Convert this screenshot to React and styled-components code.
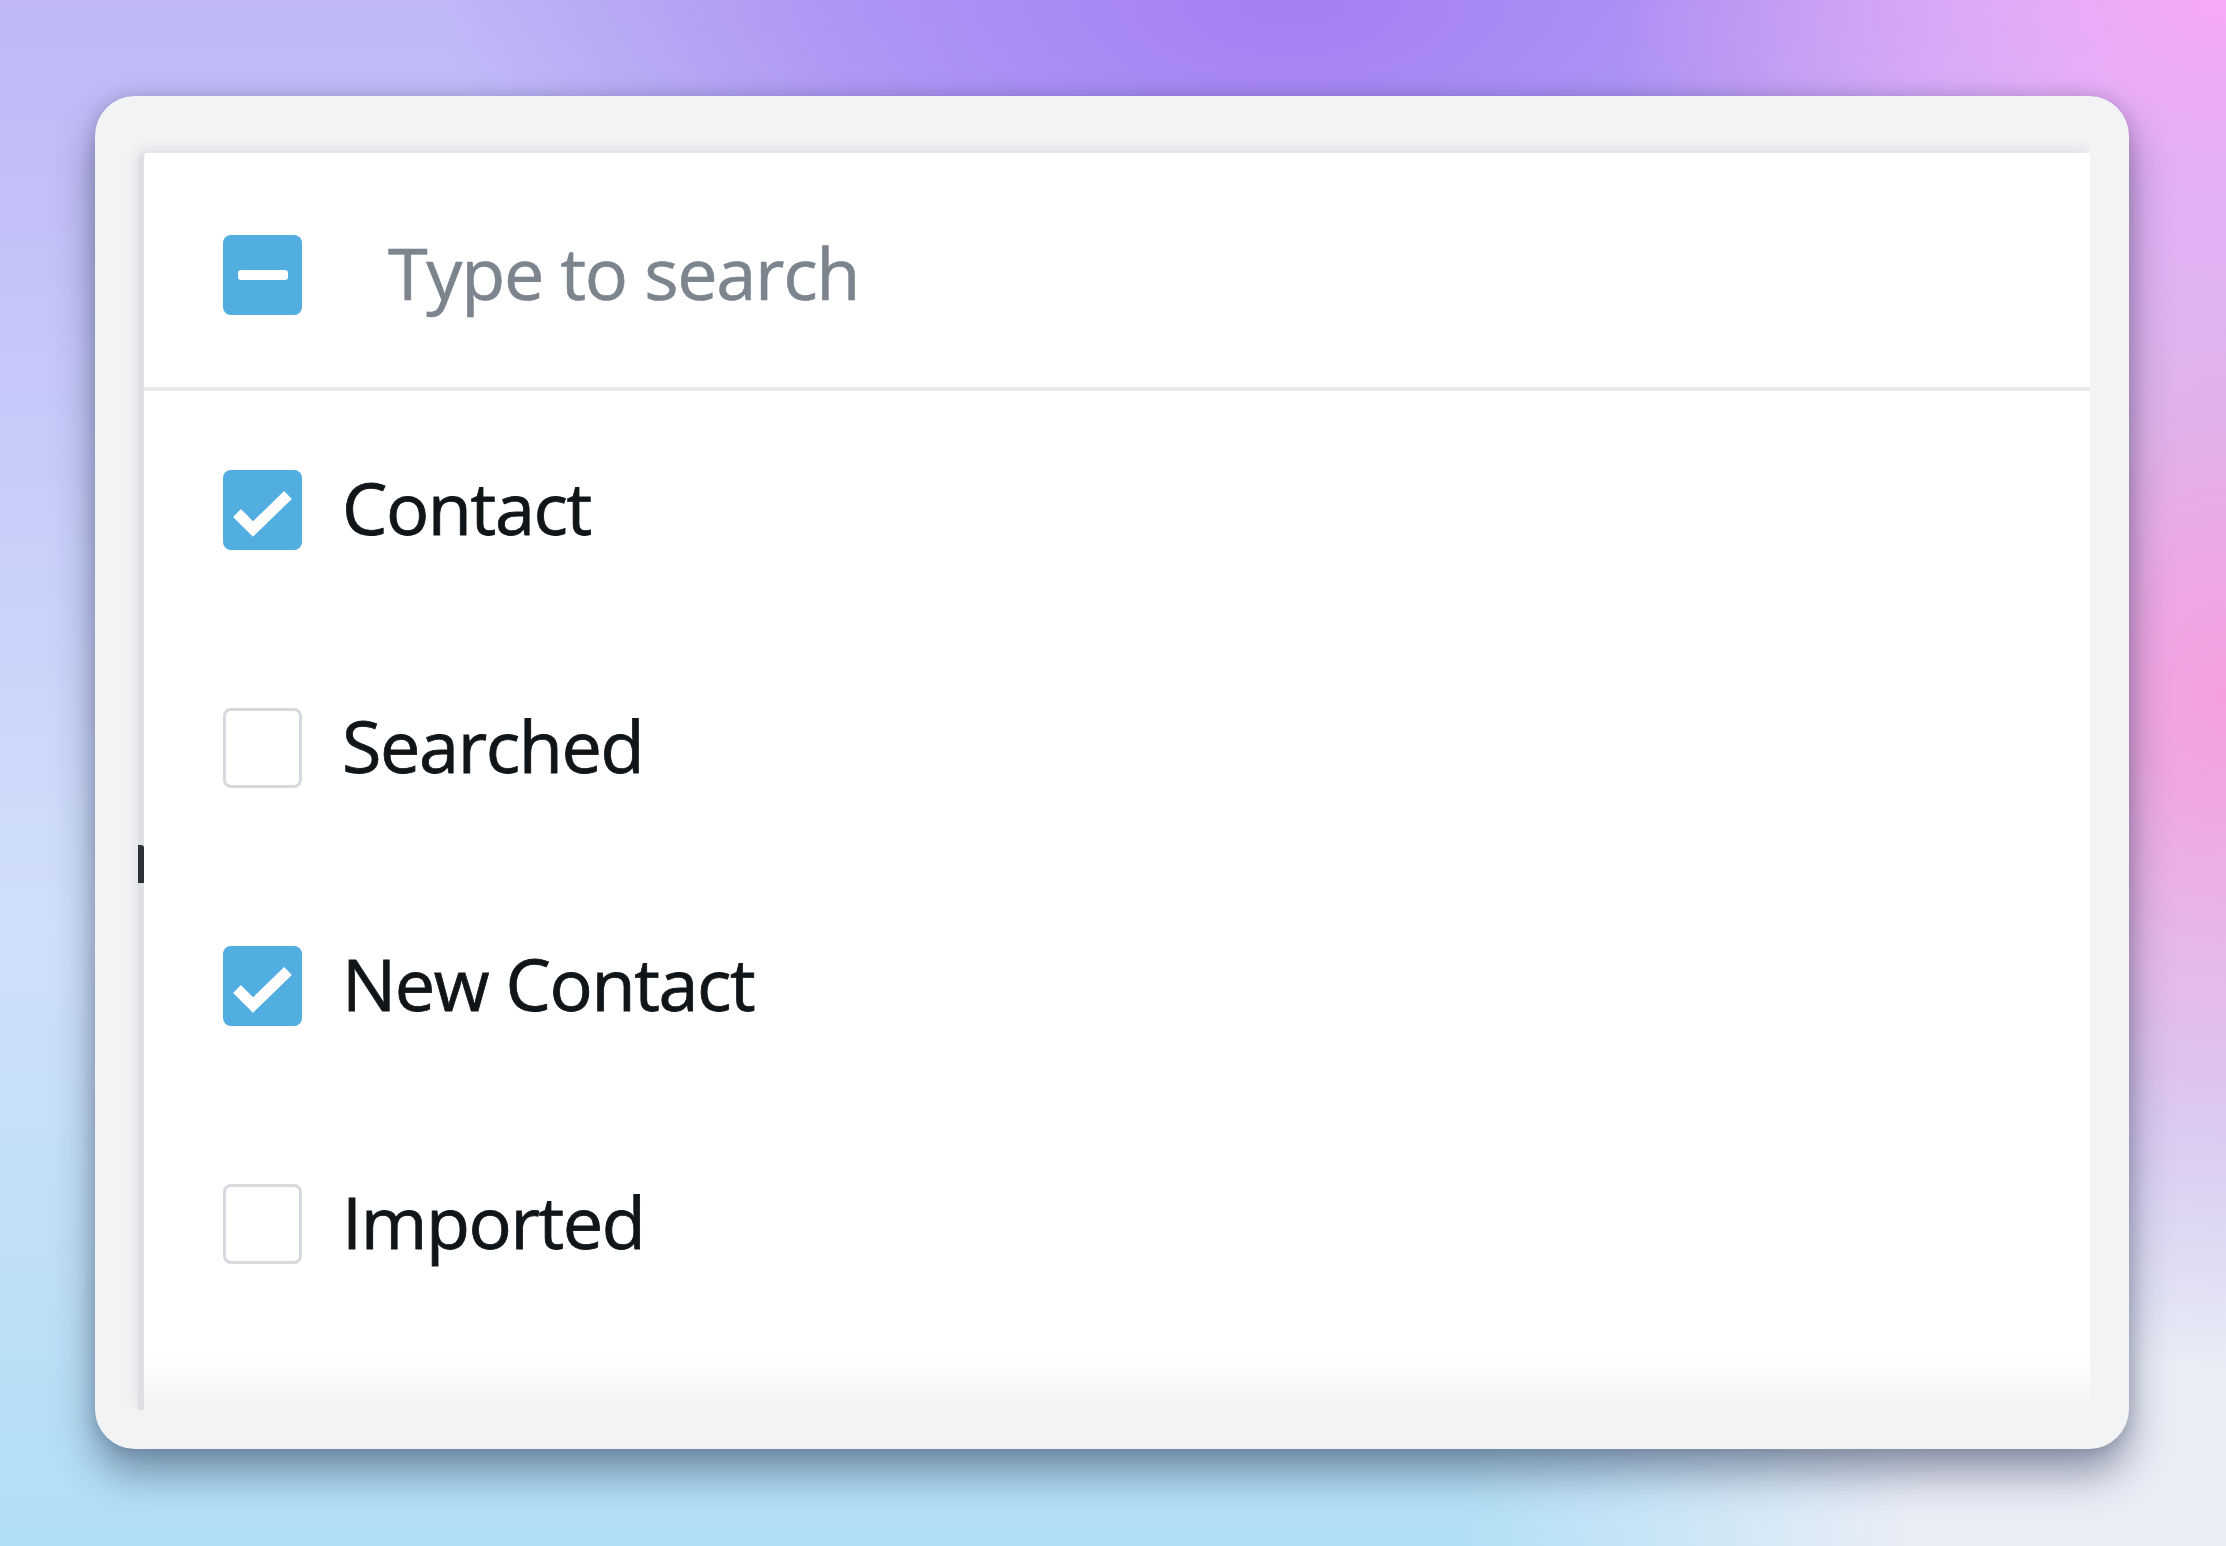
import React, { useState } from 'react';
import styled, { createGlobalStyle } from 'styled-components';

const GlobalStyle = createGlobalStyle`
    html, body {
        margin: 0;
        padding: 0;
    }
    body {
        width: 2226px;
        height: 1546px;
        overflow: hidden;
        font-family: "Open Sans", "Noto Sans", sans-serif;
        background:
            radial-gradient(ellipse 620px 420px at 100% 0%, #f6a9f6 0%, rgba(246, 169, 246, 0) 100%),
            radial-gradient(ellipse 760px 900px at 100% 45%, #f59ee0 0%, rgba(245, 158, 224, 0) 75%),
            radial-gradient(ellipse 900px 620px at 98% 100%, #e9edf6 0%, #e9edf6 30%, rgba(233, 237, 246, 0) 80%),
            radial-gradient(ellipse 1000px 520px at 58% 0%, #a37ef2 0%, rgba(163, 126, 242, 0.6) 45%, rgba(163, 126, 242, 0) 85%),
            linear-gradient(180deg, #bfb7f6 0%, #c8d0fa 35%, #d0dffb 60%, #b0dff6 100%);
    }
`;

const Page = styled.div`
    box-sizing: border-box;
    width: 2226px;
    height: 1546px;
    padding: 96px 97px 97px 95px;
`;

const Card = styled.div`
    box-sizing: border-box;
    height: 100%;
    background: #f2f3f5;
    border-radius: 40px;
    box-shadow: 0 24px 40px rgba(28, 40, 70, 0.45), 0 0 16px rgba(28, 40, 70, 0.18);
    padding: 57px 39px 39px 43px;
    display: flex;
`;

const Panel = styled.div`
    position: relative;
    flex: 1;
    display: flex;
    flex-direction: column;
    background: #fff;
    border-left: 6px solid #dfe0e3;
    border-top-left-radius: 8px;
    box-shadow: -2px -4px 14px rgba(40, 45, 60, 0.09);
    clip-path: inset(-30px 0 0 -30px);
    &::after {
        content: "";
        position: absolute;
        left: 0;
        right: 0;
        bottom: 0;
        height: 60px;
        background: linear-gradient(180deg, rgba(255, 255, 255, 0) 0%, #fafafb 55%, #f1f2f4 100%);
    }
`;

// bit of text peeking from behind the panel
const Sliver = styled.span`
    position: absolute;
    left: -6px;
    top: 692px;
    width: 6px;
    height: 38px;
    border-radius: 0 3px 0 0;
    background: #2c3038;
`;

const SearchBar = styled.div`
    box-sizing: border-box;
    height: 238px;
    display: flex;
    align-items: center;
    padding: 10px 0 0 79px;
    gap: 86px;
    border-bottom: 4px solid #e9ebee;
`;

const SearchInput = styled.input`
    flex: 1;
    border: none;
    outline: none;
    background: transparent;
    font-family: "Open Sans", "Noto Sans", sans-serif;
    font-size: 72px;
    letter-spacing: -1.3px;
    color: #1a1f24;
    padding: 0 0 6px;
    &::placeholder {
        color: #7c848e;
        -webkit-text-stroke: 0.6px #7c848e;
    }
`;

const List = styled.ul`
    list-style: none;
    margin: 0;
    padding: 0;
`;

const Row = styled.li`
    height: 238px;
    display: flex;
    align-items: center;
    padding-left: 79px;
    gap: 40px;
    cursor: pointer;
`;

const Box = styled.span`
    box-sizing: border-box;
    width: 79px;
    height: 80px;
    flex: none;
    border-radius: 8px;
    display: flex;
    align-items: center;
    justify-content: center;
    background: ${p => (p.$on ? '#52ade0' : '#fff')};
    border: ${p => (p.$on ? 'none' : '3px solid #d6d9de')};
`;

const Dash = styled.span`
    width: 50px;
    height: 10px;
    border-radius: 3px;
    background: #fff;
`;

const Label = styled.span`
    font-size: 72px;
    letter-spacing: -1.4px;
    color: #0f1519;
    -webkit-text-stroke: 0.8px #0f1519;
    line-height: 1;
    padding-bottom: 6px;
`;

const Check = () => (
    <svg width="79" height="80" viewBox="0 0 79 80">
        <path d="M14 43 L30 59 L65 25" fill="none" stroke="#fff" strokeWidth="11" />
    </svg>
);

const items = [
    { name: 'Contact', on: true },
    { name: 'Searched', on: false },
    { name: 'New Contact', on: true },
    { name: 'Imported', on: false },
];

export default function App() {
    const [ list, setList ] = useState(items);
    const toggle = i => setList(list.map((it, j) => (j === i ? { ...it, on: !it.on } : it)));

    return (
        <Page>
            <GlobalStyle />
            <Card>
                <Panel>
                    <Sliver />
                    <SearchBar>
                        <Box $on>
                            <Dash />
                        </Box>
                        <SearchInput placeholder="Type to search" />
                    </SearchBar>
                    <List>
                        {list.map((it, i) => (
                            <Row key={it.name} onClick={() => toggle(i)}>
                                <Box $on={it.on}>{it.on && <Check />}</Box>
                                <Label>{it.name}</Label>
                            </Row>
                        ))}
                    </List>
                </Panel>
            </Card>
        </Page>
    );
}
